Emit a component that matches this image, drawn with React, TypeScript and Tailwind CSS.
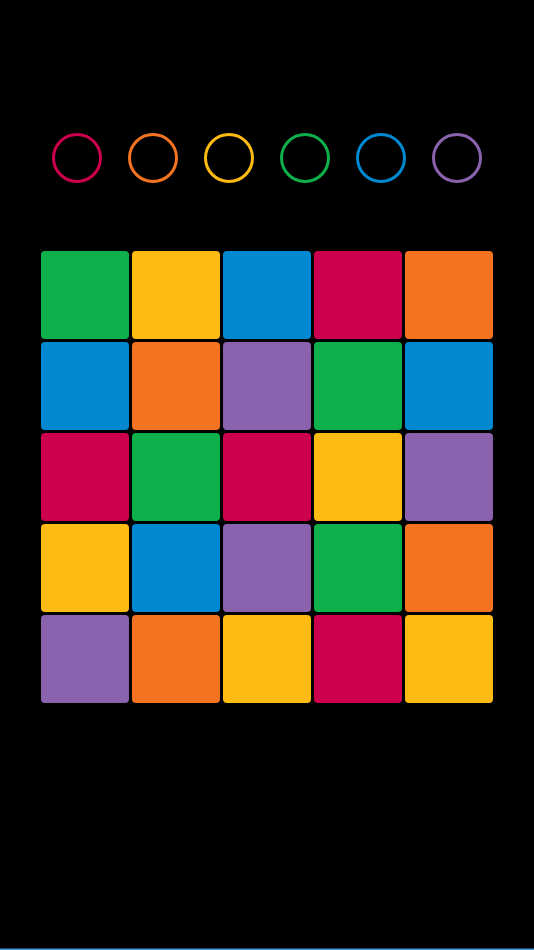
const COLORS: Record<string, string> = {
  red: "#cc004c",
  orange: "#f37321",
  yellow: "#fdbb13",
  green: "#0db04b",
  blue: "#0089d1",
  purple: "#8a62ad",
};

const RINGS = ["red", "orange", "yellow", "green", "blue", "purple"];

const BOARD = [
  ["green", "yellow", "blue", "red", "orange"],
  ["blue", "orange", "purple", "green", "blue"],
  ["red", "green", "red", "yellow", "purple"],
  ["yellow", "blue", "purple", "green", "orange"],
  ["purple", "orange", "yellow", "red", "yellow"],
];

export default function App() {
  return (
    <div className="w-[534px] h-[950px] bg-black flex flex-col">
      {/* color picker rings */}
      <div className="pt-[133px] flex justify-center gap-[26px]">
        {RINGS.map((c) => (
          <div
            key={c}
            className="w-[50px] h-[50px] rounded-full border-[3px]"
            style={{ borderColor: COLORS[c] }}
          />
        ))}
      </div>

      {/* board */}
      <div className="mt-[68px] mx-auto grid grid-cols-5 gap-[3px]">
        {BOARD.flatMap((row, r) =>
          row.map((c, i) => (
            <div
              key={`${r}-${i}`}
              className="w-[88px] h-[88px] rounded-[4px]"
              style={{ backgroundColor: COLORS[c] }}
            />
          )),
        )}
      </div>

      <div className="flex-1" />
      <div className="h-[2px] border-t border-[#1d4b68] bg-[#3a9ad8]" />
    </div>
  );
}
